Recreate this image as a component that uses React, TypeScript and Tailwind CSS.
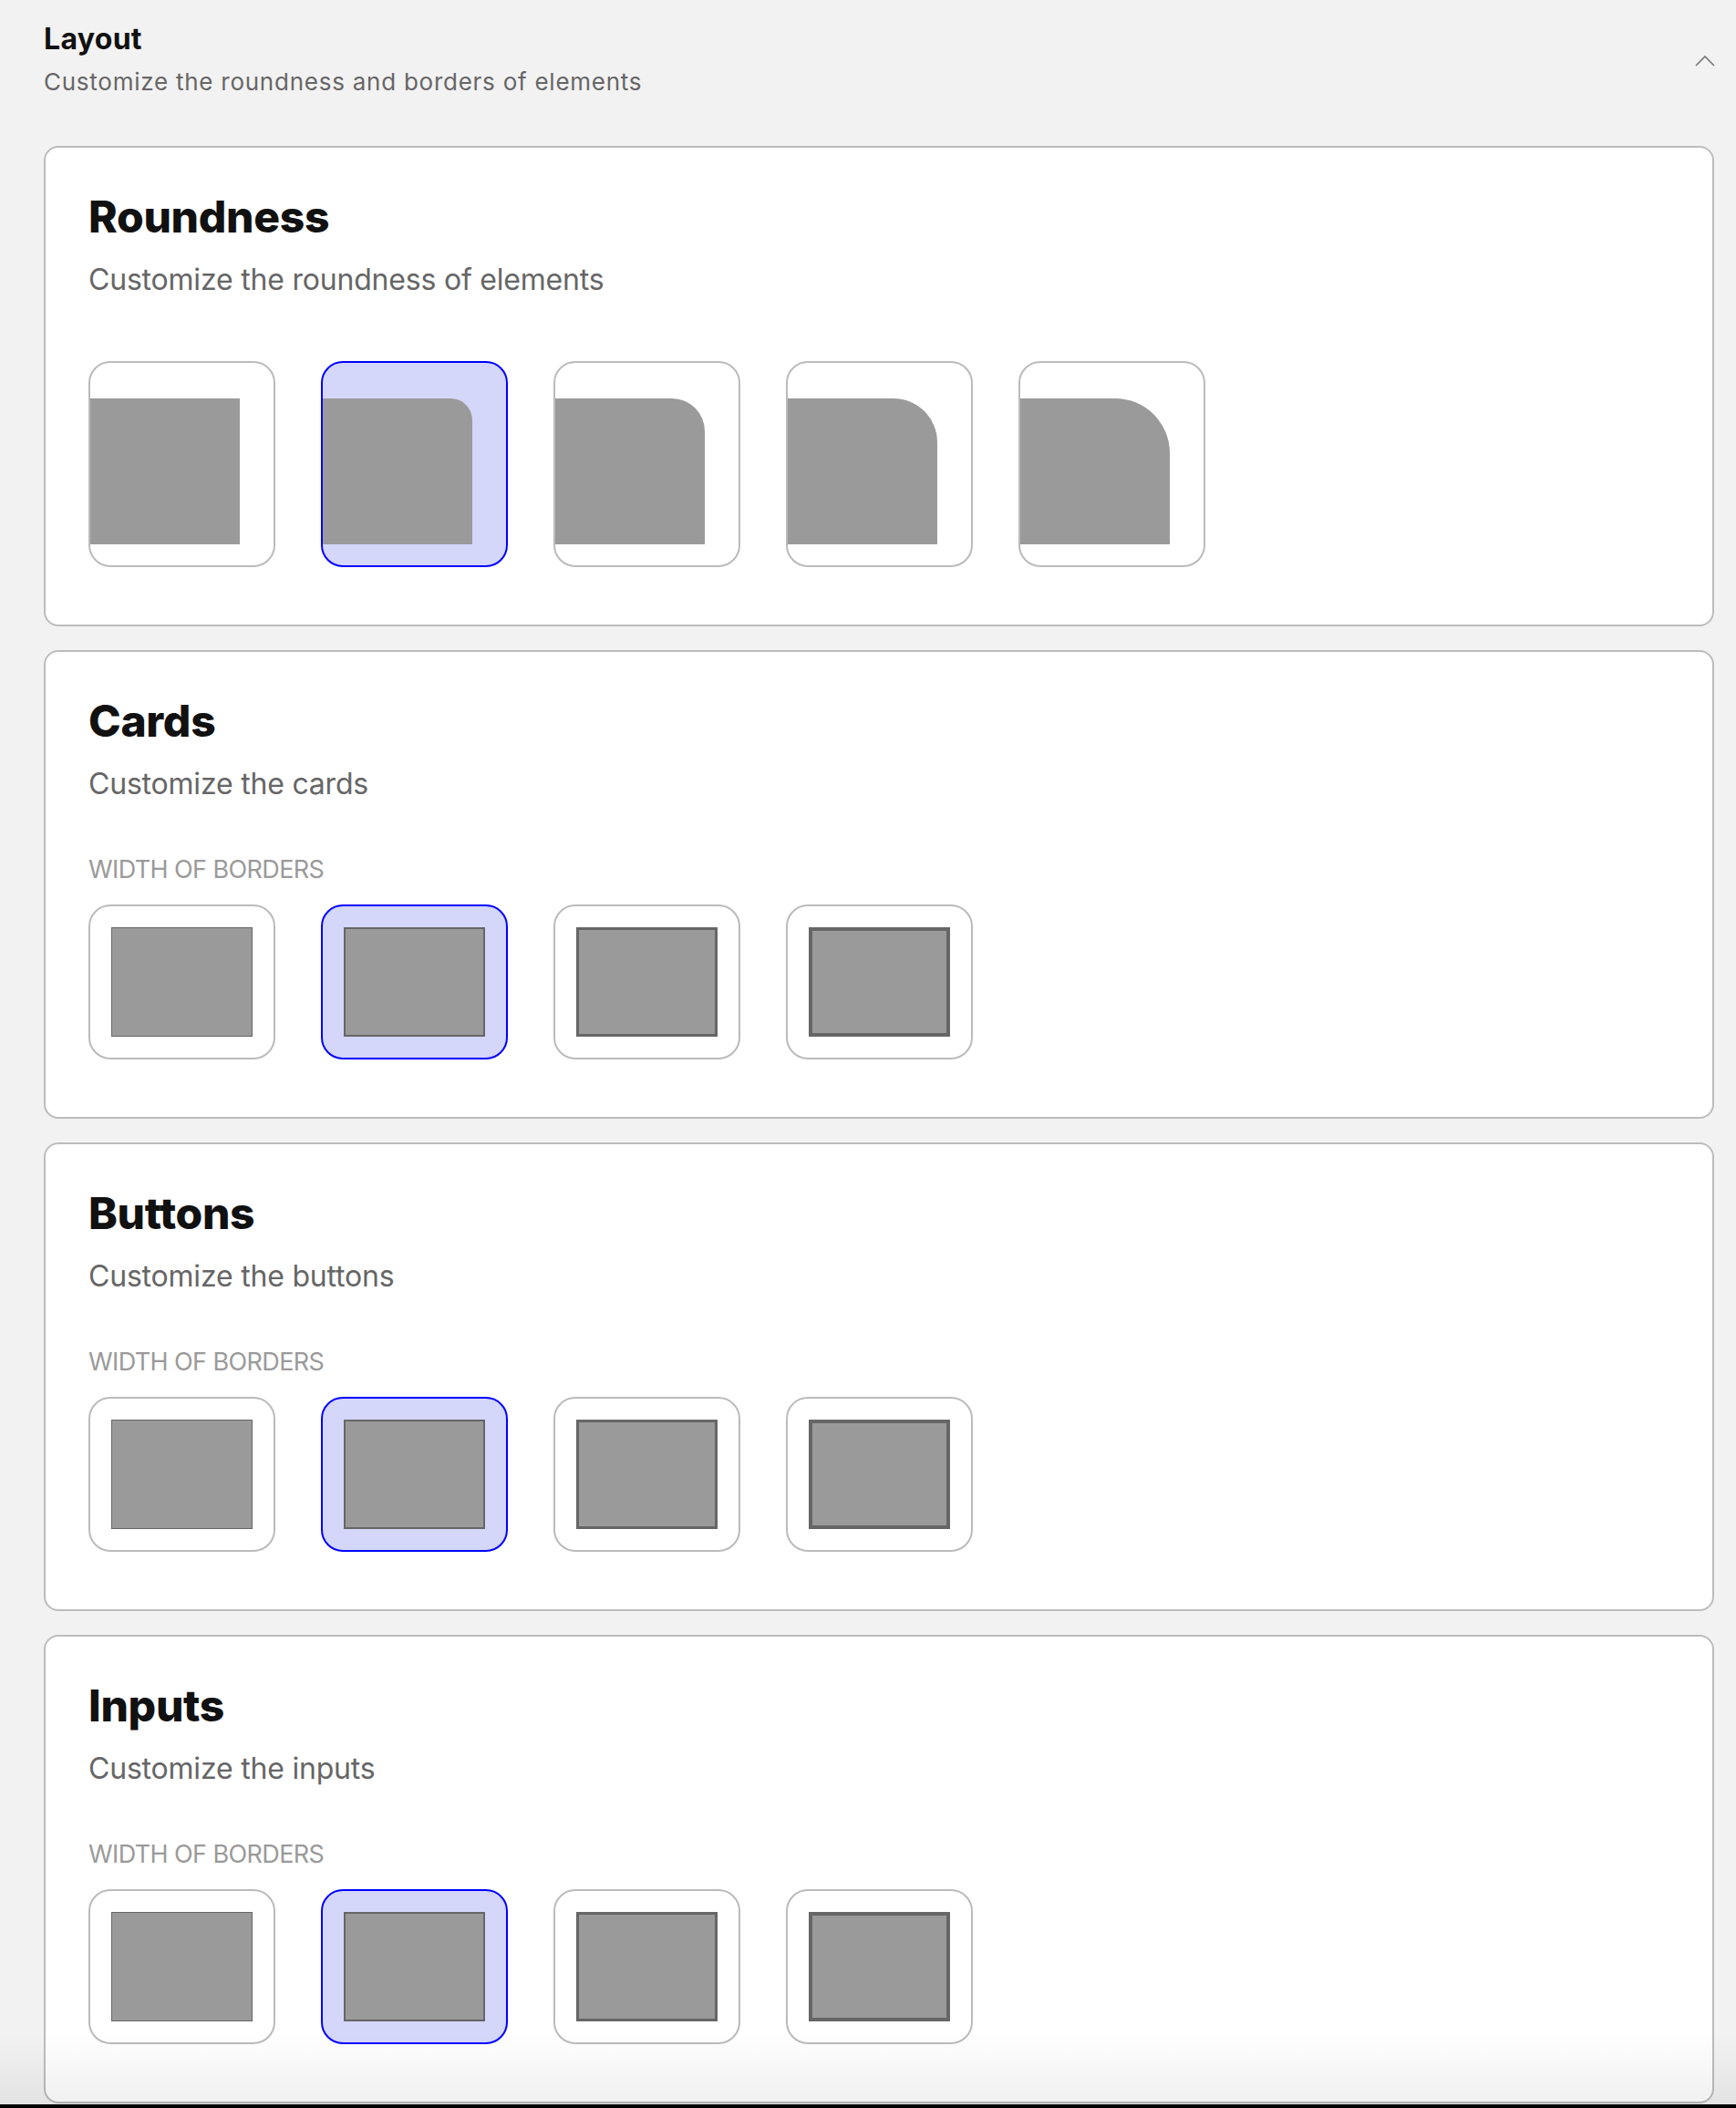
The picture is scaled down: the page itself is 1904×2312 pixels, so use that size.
import React from "react";

const FONT = { fontFamily: "Inter, 'Noto Sans', sans-serif" };

const radii = [
  "rounded-tr-none",
  "rounded-tr-[24px]",
  "rounded-tr-[36px]",
  "rounded-tr-[48px]",
  "rounded-tr-[60px]",
];

const borderWidths = ["border", "border-2", "border-[3px]", "border-4"];

function optionClass(selected: boolean) {
  return selected
    ? "rounded-[24px] border-2 border-[#0000ff] bg-[#d4d6fa]"
    : "rounded-[24px] border-2 border-[#bbbbbb] bg-white";
}

function CardHeader({ title, subtitle }: { title: string; subtitle: string }) {
  return (
    <>
      <h2 className="text-[48px] leading-[56px] font-extrabold text-[#111111] tracking-[-0.3px]">{title}</h2>
      <p className="mt-[21px] text-[32px] leading-[40px] text-[#666666] tracking-[-0.2px]">{subtitle}</p>
    </>
  );
}

function RoundnessCard() {
  return (
    <div className="rounded-[16px] border-2 border-[#bcbcbc] bg-white pl-[47px] pr-[48px] pt-[48px] pb-[63px]">
      <CardHeader title="Roundness" subtitle="Customize the roundness of elements" />
      <div className="mt-[69px] flex gap-[50px]">
        {radii.map((r, i) => (
          <div key={i} className={`w-[205px] h-[226px] pt-[39px] ${optionClass(i === 1)}`}>
            <div className={`w-[164px] h-[160px] bg-[#9a9a9a] ${r}`} />
          </div>
        ))}
      </div>
    </div>
  );
}

function BorderCard({ title, subtitle }: { title: string; subtitle: string }) {
  return (
    <div className="rounded-[16px] border-2 border-[#bcbcbc] bg-white pl-[47px] pr-[48px] pt-[48px] pb-[63px]">
      <CardHeader title={title} subtitle={subtitle} />
      <div className="mt-[58px] text-[27px] leading-[32px] text-[#9a9a9a] uppercase tracking-[-0.6px]">
        Width of borders
      </div>
      <div className="mt-[22px] flex gap-[50px]">
        {borderWidths.map((b, i) => (
          <div key={i} className={`w-[205px] h-[170px] p-[23px] ${optionClass(i === 1)}`}>
            <div className={`w-full h-full bg-[#9a9a9a] border-[#666666] ${b}`} />
          </div>
        ))}
      </div>
    </div>
  );
}

export default function App() {
  return (
    <div className="relative h-[2312px] overflow-hidden bg-[#f2f2f2]" style={FONT}>
      <div className="pl-[48px] pr-[24px]">
        <div className="flex items-center justify-between pt-[23px]">
          <div>
            <h1 className="text-[32px] leading-[40px] font-bold text-[#111111] tracking-[0.3px]">Layout</h1>
            <p className="mt-[11px] text-[26px] leading-[32px] text-[#666666] tracking-[0.75px]">
              Customize the roundness and borders of elements
            </p>
          </div>
          <svg width="22" height="13" viewBox="0 0 22 13" fill="none" className="mt-[4px] -mr-px">
            <path d="M1 12 L11 2 L21 12" stroke="#777777" strokeWidth="1.6" />
          </svg>
        </div>
        <div className="mt-[54px] flex flex-col gap-[26px]">
          <RoundnessCard />
          <BorderCard title="Cards" subtitle="Customize the cards" />
          <BorderCard title="Buttons" subtitle="Customize the buttons" />
          <BorderCard title="Inputs" subtitle="Customize the inputs" />
        </div>
      </div>
      <div className="pointer-events-none absolute left-0 right-0 bottom-[4px] h-[80px] bg-gradient-to-b from-transparent to-black/[0.06]" />
      <div className="absolute left-0 right-0 bottom-0 h-[4px] bg-black" />
    </div>
  );
}
